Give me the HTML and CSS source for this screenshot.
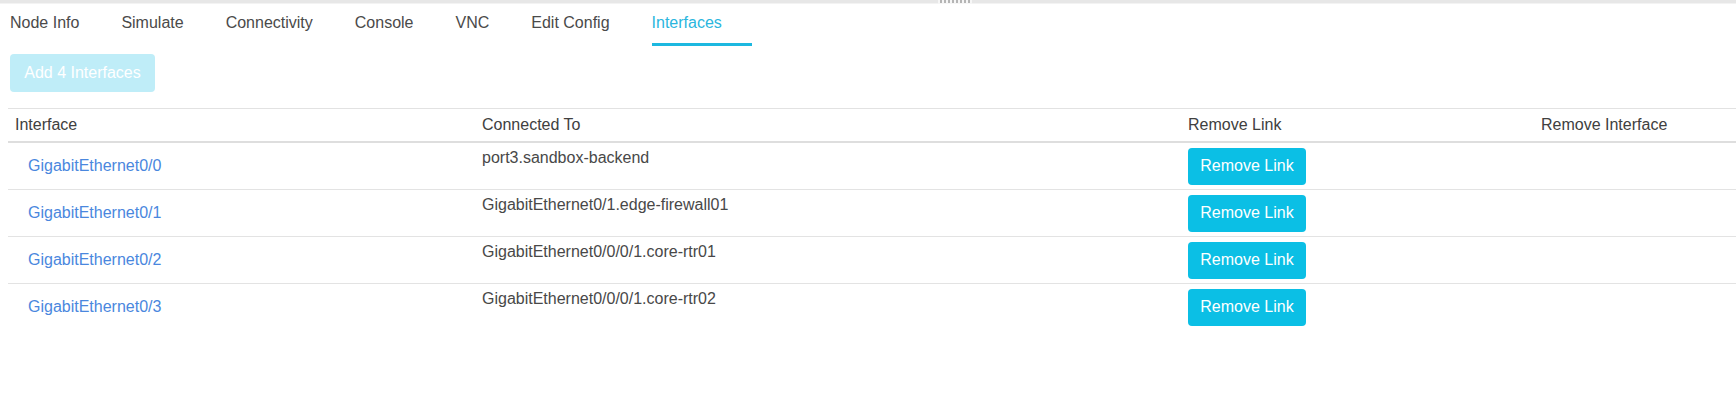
FILE: index.html
```html
<!DOCTYPE html>
<html lang="en">
<head>
<meta charset="utf-8">
<title>Interfaces</title>
<link rel="stylesheet" href="styles.css">
</head>
<body>
<div class="topbar"><div class="grip"><span></span><span></span><span></span><span></span><span></span><span></span><span></span><span></span></div></div>
<nav class="tabs">
  <div class="tab">Node Info</div>
  <div class="tab">Simulate</div>
  <div class="tab">Connectivity</div>
  <div class="tab">Console</div>
  <div class="tab">VNC</div>
  <div class="tab">Edit Config</div>
  <div class="tab active">Interfaces</div>
</nav>
<div class="actions">
  <button class="btn btn-disabled" disabled>Add 4 Interfaces</button>
</div>
<div class="table">
  <div class="row head">
    <div class="cell">Interface</div>
    <div class="cell">Connected To</div>
    <div class="cell">Remove Link</div>
    <div class="cell">Remove Interface</div>
  </div>
  <div class="row">
    <div class="cell iface"><a class="link">GigabitEthernet0/0</a></div>
    <div class="cell conn">port3.sandbox-backend</div>
    <div class="cell act"><button class="btn btn-primary">Remove Link</button></div>
    <div class="cell"></div>
  </div>
  <div class="row">
    <div class="cell iface"><a class="link">GigabitEthernet0/1</a></div>
    <div class="cell conn">GigabitEthernet0/1.edge-firewall01</div>
    <div class="cell act"><button class="btn btn-primary">Remove Link</button></div>
    <div class="cell"></div>
  </div>
  <div class="row">
    <div class="cell iface"><a class="link">GigabitEthernet0/2</a></div>
    <div class="cell conn">GigabitEthernet0/0/0/1.core-rtr01</div>
    <div class="cell act"><button class="btn btn-primary">Remove Link</button></div>
    <div class="cell"></div>
  </div>
  <div class="row last">
    <div class="cell iface"><a class="link">GigabitEthernet0/3</a></div>
    <div class="cell conn">GigabitEthernet0/0/0/1.core-rtr02</div>
    <div class="cell act"><button class="btn btn-primary">Remove Link</button></div>
    <div class="cell"></div>
  </div>
</div>
</body>
</html>
```
FILE: styles.css
```css
html, body {
  margin: 0;
  padding: 0;
  background: #ffffff;
}
body {
  font-family: "Liberation Sans", Arial, sans-serif;
  font-size: 16px;
  line-height: 20px;
  color: #484848;
}
.topbar {
  height: 3px;
  background: #e7e7e7;
  border-bottom: 1px solid #f3f3f3;
  display: flex;
}
.grip {
  margin-left: 938px;
  display: flex;
  gap: 2px;
  height: 4px;
  padding: 0 2px;
  background: #f6f6f6;
}
.grip span {
  width: 2px;
  height: 3px;
  background: #b5b5b5;
}
.tabs {
  display: flex;
  padding-left: 10px;
}
.tab {
  padding: 9px 30px 10px 0;
  margin-right: 12px;
  border-bottom: 3px solid transparent;
  color: #4a4a4a;
  white-space: nowrap;
}
.tab.active {
  color: #2ab6de;
  border-bottom-color: #1cb8e0;
}
.actions {
  padding: 8px 0 0 10px;
}
.btn {
  font-family: "Liberation Sans", Arial, sans-serif;
  font-size: 16px;
  border: none;
  border-radius: 4px;
  color: #ffffff;
  padding: 0;
}
.btn-disabled {
  width: 145px;
  height: 38px;
  background: #bfedf8;
}
.btn-primary {
  width: 118px;
  height: 37px;
  background: #0bbfe5;
}
.table {
  margin: 16px 0 0 8px;
  border-top: 1px solid #e2e2e2;
}
.row {
  display: grid;
  grid-template-columns: 467px 706px 353px 1fr;
  border-bottom: 1px solid #e3e3e3;
  min-height: 46px;
}
.row.head {
  min-height: 32px;
  border-bottom: 2px solid #dedede;
  align-items: center;
  color: #404040;
}
.row.last {
  border-bottom: none;
}
.cell {
  padding-left: 7px;
}
.iface {
  align-self: center;
  padding-left: 20px;
}
.link {
  color: #4a87de;
  text-decoration: none;
}
.conn {
  align-self: start;
  padding-top: 5px;
  color: #484848;
}
.act {
  align-self: center;
  display: flex;
  align-items: center;
  padding-top: 4px;
  padding-bottom: 4px;
}
```
